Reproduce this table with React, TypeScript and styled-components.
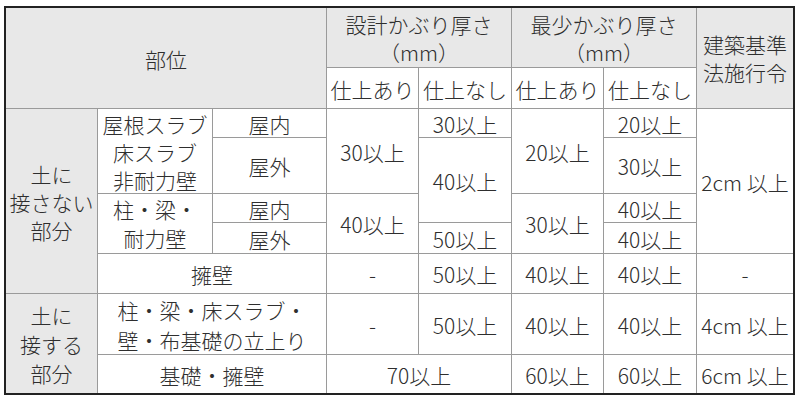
import React from "react";
import styled, { createGlobalStyle } from "styled-components";

const Global = createGlobalStyle`
  html, body { margin: 0; padding: 0; background: #ffffff; }
  body { font-family: "Noto Sans CJK JP", "Noto Sans", sans-serif; }
`;

const Page = styled.div`
  width: 800px;
  height: 401px;
  padding: 6px 0 0 4px;
  box-sizing: border-box;
`;

const Table = styled.div`
  display: grid;
  grid-template-columns: 91px 114px 113px 91px 92px 91px 92px 96px;
  grid-template-rows: 59px 40px 28px 55px 28px 30px 39px 60px 38px;
  gap: 1px;
  background: #9a9a9a;
  border: 2px solid #222;
  width: max-content;
`;

const Cell = styled.div<{ $c: string; $r: string; $head?: boolean; $shift?: number }>`
  grid-column: ${(p) => p.$c};
  grid-row: ${(p) => p.$r};
  background: ${(p) => (p.$head ? "#e8e8e8" : "#ffffff")};
  display: flex;
  flex-direction: column;
  align-items: center;
  justify-content: center;
  text-align: center;
  font-size: 21px;
  font-weight: 300;
  color: #2e2e2e;
  white-space: nowrap;
  padding-top: ${(p) => p.$shift ?? 1}px;
  box-sizing: border-box;
`;

const Line = styled.div<{ $lh: number }>`
  display: block;
  height: ${(p) => p.$lh}px;
  line-height: ${(p) => p.$lh}px;
`;

type C = { c: string; r: string; head?: boolean; lh?: number; shift?: number; lines: string[] };

const cells: C[] = [
  { c: "1 / 4", r: "1 / 3", head: true, lines: ["部位"] },
  { c: "4 / 6", r: "1 / 2", head: true, lh: 28, shift: 1, lines: ["設計かぶり厚さ", "（mm）"] },
  { c: "6 / 8", r: "1 / 2", head: true, lh: 28, shift: 1, lines: ["最少かぶり厚さ", "（mm）"] },
  { c: "8 / 9", r: "1 / 3", head: true, lh: 28, shift: 0, lines: ["建築基準", "法施行令"] },
  { c: "4", r: "2", lines: ["仕上あり"] },
  { c: "5", r: "2", lines: ["仕上なし"] },
  { c: "6", r: "2", lines: ["仕上あり"] },
  { c: "7", r: "2", lines: ["仕上なし"] },

  { c: "1", r: "3 / 8", head: true, lh: 28, lines: ["土に", "接さない", "部分"] },
  { c: "2", r: "3 / 5", lh: 28, lines: ["屋根スラブ", "床スラブ", "非耐力壁"] },
  { c: "3", r: "3", lines: ["屋内"] },
  { c: "3", r: "4", lines: ["屋外"] },
  { c: "2", r: "5 / 7", lh: 29, lines: ["柱・梁・", "耐力壁"] },
  { c: "3", r: "5", lines: ["屋内"] },
  { c: "3", r: "6", lines: ["屋外"] },
  { c: "2 / 4", r: "7", lines: ["擁壁"] },
  { c: "1", r: "8 / 10", head: true, lh: 29, lines: ["土に", "接する", "部分"] },
  { c: "2 / 4", r: "8", lh: 30, lines: ["柱・梁・床スラブ・", "壁・布基礎の立上り"] },
  { c: "2 / 4", r: "9", lines: ["基礎・擁壁"] },

  { c: "4", r: "3 / 5", lines: ["30以上"] },
  { c: "4", r: "5 / 7", lines: ["40以上"] },
  { c: "4", r: "7", lines: ["-"] },
  { c: "4", r: "8", lines: ["-"] },
  { c: "4 / 6", r: "9", lines: ["70以上"] },

  { c: "5", r: "3", lines: ["30以上"] },
  { c: "5", r: "4 / 6", lines: ["40以上"] },
  { c: "5", r: "6", lines: ["50以上"] },
  { c: "5", r: "7", lines: ["50以上"] },
  { c: "5", r: "8", lines: ["50以上"] },

  { c: "6", r: "3 / 5", lines: ["20以上"] },
  { c: "6", r: "5 / 7", lines: ["30以上"] },
  { c: "6", r: "7", lines: ["40以上"] },
  { c: "6", r: "8", lines: ["40以上"] },
  { c: "6", r: "9", lines: ["60以上"] },

  { c: "7", r: "3", lines: ["20以上"] },
  { c: "7", r: "4", lines: ["30以上"] },
  { c: "7", r: "5", lines: ["40以上"] },
  { c: "7", r: "6", lines: ["40以上"] },
  { c: "7", r: "7", lines: ["40以上"] },
  { c: "7", r: "8", lines: ["40以上"] },
  { c: "7", r: "9", lines: ["60以上"] },

  { c: "8", r: "3 / 7", lines: ["2cm 以上"] },
  { c: "8", r: "7", lines: ["-"] },
  { c: "8", r: "8", lines: ["4cm 以上"] },
  { c: "8", r: "9", lines: ["6cm 以上"] },
];

export default function App() {
  return (
    <>
      <Global />
      <Page>
        <Table>
          {cells.map((cell, i) => (
            <Cell key={i} $c={cell.c} $r={cell.r} $head={cell.head} $shift={cell.shift}>
              {cell.lines.map((l, j) => (
                <Line key={j} $lh={cell.lh ?? 28}>
                  {l}
                </Line>
              ))}
            </Cell>
          ))}
        </Table>
      </Page>
    </>
  );
}
